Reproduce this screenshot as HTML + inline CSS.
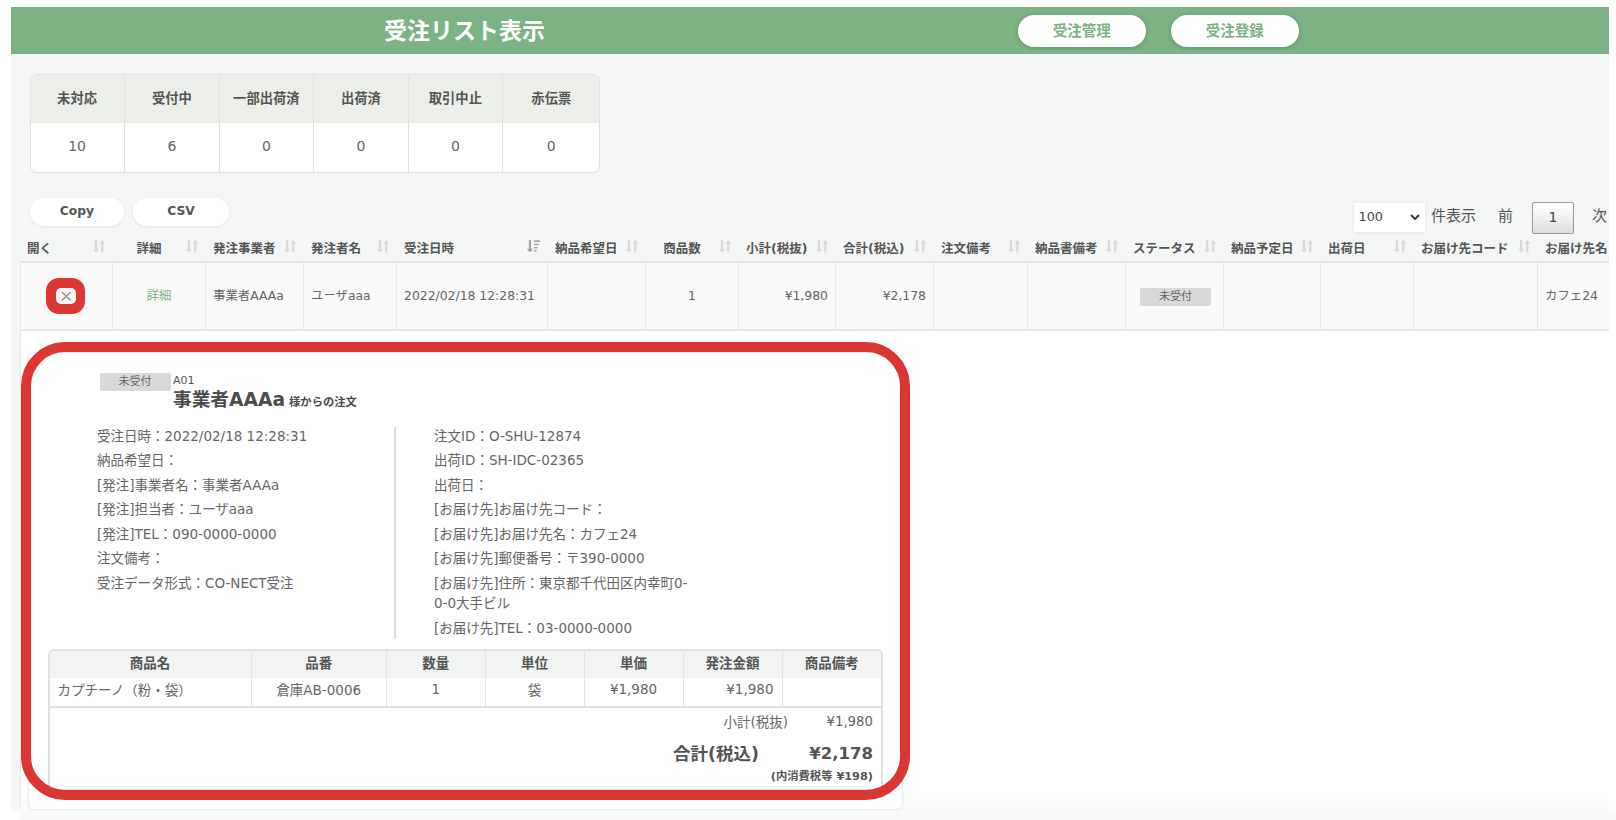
<!DOCTYPE html>
<html lang="ja">
<head>
<meta charset="utf-8">
<title>受注リスト表示</title>
<style>
*{box-sizing:border-box;margin:0;padding:0}
html,body{width:1616px;height:820px;background:#fff;overflow:hidden}
body{font-family:"DejaVu Sans","Liberation Sans","Noto Sans CJK JP",sans-serif;color:#666;font-size:12px;position:relative}
.abs{position:absolute;white-space:nowrap}
#app{position:absolute;left:11px;top:7px;width:1598px;height:804px;background:#f4f5f5;overflow:hidden}
/* everything inside #app is positioned in page coordinates via this shifted layer */
#layer{position:absolute;left:-11px;top:-7px;width:1616px;height:820px}
#hdr{left:11px;top:7px;width:1598px;height:47px;background:#7bb384}
#title{left:384px;top:14px;height:34px;line-height:34px;font-size:23px;font-weight:700;color:#fff;letter-spacing:0}
.pill{background:#fff;border-radius:16px;text-align:center;font-weight:700}
.hbtn{top:15px;width:127.5px;height:32px;line-height:33px;color:#7bb384;font-size:14.5px;box-shadow:0 1px 5px rgba(0,0,0,.2)}
.tbtn{top:198px;height:28px;line-height:26.3px;color:#555;font-size:12.3px;box-shadow:0 1px 3px rgba(0,0,0,.08)}
/* status summary */
#stat{left:30px;top:74px;width:569.5px;height:99px;border:1px solid #dfe2de;border-radius:7px;background:#fff;overflow:hidden}
#stat table{border-collapse:collapse;width:569.5px;margin-left:-1px;table-layout:fixed}
#stat th{height:48px;padding-bottom:3px;background:#eceeea;color:#555;font-size:13.3px;font-weight:700;border-left:1px solid #dfe2de;text-align:center}
#stat td{color:#666;font-size:14px;border-left:1px solid #dfe2de;text-align:center;height:49px;padding-bottom:3px}
#stat th:first-child,#stat td:first-child{border-left:0}

/* controls */
#len{left:1354px;top:203px;width:71px;height:29px;background:#fff;box-shadow:0 1px 3px rgba(0,0,0,.08);font-size:12.8px;color:#444;line-height:27px;padding-left:4.5px}
.ctl{top:202px;height:28px;line-height:28px;font-size:15px;color:#555}
#pg1{left:1532px;top:202px;width:42px;height:32px;border:1px solid #999;border-radius:2px;background:linear-gradient(#fff,#dedede);text-align:center;line-height:28px;font-size:14px;color:#444}
/* list */
.row{left:20px;width:1589px;display:flex}
.row>div{flex:none;position:relative}
#lh{left:21px;width:1588px;top:235.5px;height:27px;border-bottom:2px solid #e3e6e3}
#lh>div{padding-left:8px;line-height:25px;font-size:12.5px;font-weight:700;color:#555;white-space:nowrap}
#lh>div.c{text-align:center;padding-right:27px}#lh>div:first-child{padding-left:6px}
#lh svg{position:absolute;right:7px;top:4.6px;width:12.2px;height:12.6px}
#lr{top:263px;height:68px;background:#f9f9f9;border-bottom:2px solid #e9ebe9;border-left:1px solid #e6e6e6}
#lr>div{border-left:1px solid #e6e6e6;line-height:65.5px;padding:0 7px;font-size:12.4px;color:#666;white-space:nowrap}
#lr>div:first-child{border-left:0}
#lr .c{text-align:center}#lr .r{text-align:right}
.badge{display:inline-block;width:71px;height:18px;line-height:18px;background:#d9d9d9;border-radius:2px;font-size:11px;color:#666;text-align:center;vertical-align:middle}
#xring{left:46px;top:277.8px;width:39px;height:36px;border-radius:13px;background:#db3631}
#xbtn{left:56px;top:288px;width:20px;height:16px;border-radius:5px;background:#f5f5f5}
#child{left:20px;top:331px;width:1589px;height:480px;background:#fff;border-left:1px solid #e6e6e6}

/* detail card */
#card{left:28px;top:351.5px;width:875px;height:458.5px;background:#fff;border:1px solid #ebebeb;border-radius:7px;box-shadow:0 1px 4px rgba(0,0,0,.06)}
#dbadge{left:99.5px;top:373px}
#dcode{left:173px;top:373px;font-size:11px;line-height:16px;color:#555}
#dname{left:173px;top:387px;font-size:18.7px;font-weight:700;line-height:26px;color:#4c4c4c}
#dname small{font-size:11.3px;font-weight:700;margin-left:4px}
.dl{font-size:13.5px;color:#666;list-style:none;white-space:normal}
.dl li{line-height:20.5px;margin-bottom:4px}
#dl1{left:97px;top:425.7px;width:290px}
#dl2{left:434px;top:425.7px;width:262px}
#dsep{left:394.4px;top:427px;width:1.6px;height:212px;background:#d9dcd9}
#items{left:47.5px;top:648.7px;width:835.5px;height:142.3px;border:2px solid #dfe2df;border-radius:6px 6px 0 0;background:#fff;overflow:hidden}
#items table{border-collapse:collapse;table-layout:fixed;width:831.5px}
#items th{height:27.7px;padding-bottom:6px;background:#f2f4f3;font-size:13.5px;font-weight:700;color:#555;text-align:center;border-left:1px solid #e2e4e2}
#items td{height:28.4px;padding-bottom:6px !important;font-size:13.5px;color:#666;text-align:center;border-left:1px solid #e2e4e2;border-bottom:2px solid #dfe1df;padding:0 8px}
#items th:first-child,#items td:first-child{border-left:0}
.tot{text-align:right}
#redbox{left:20.8px;top:342.3px;width:889.2px;height:458.1px;border:10px solid #db3631;border-radius:44px}
</style>
</head>
<body>
<div id="app"><div id="layer">

<div id="hdr" class="abs"></div>
<h1 id="title" class="abs">受注リスト表示</h1>
<a class="abs pill hbtn" style="left:1018px">受注管理</a>
<a class="abs pill hbtn" style="left:1171px">受注登録</a>

<div id="stat" class="abs">
<table><colgroup><col style="width:94.6px"><col style="width:94.5px"><col style="width:94.5px"><col style="width:94.5px"><col style="width:94.5px"><col></colgroup>
<tr><th>未対応</th><th>受付中</th><th>一部出荷済</th><th>出荷済</th><th>取引中止</th><th>赤伝票</th></tr>
<tr><td>10</td><td>6</td><td>0</td><td>0</td><td>0</td><td>0</td></tr>
</table>
</div>

<a class="abs pill tbtn" style="left:30px;width:94px">Copy</a>
<a class="abs pill tbtn" style="left:133px;width:96px">CSV</a>

<div id="len" class="abs">100<svg style="position:absolute;left:56px;top:11px" width="10" height="7" viewBox="0 0 10 7"><path d="M1 1l4 4 4-4" stroke="#333" stroke-width="1.8" fill="none"/></svg></div>
<span class="abs ctl" style="left:1431px">件表示</span>
<span class="abs ctl" style="left:1498px">前</span>
<a id="pg1" class="abs">1</a>
<span class="abs ctl" style="left:1592px">次</span>

<div id="lh" class="abs row"><div style="width:91px">開く<svg viewBox="0 0 12.2 12.6"><g fill="#d6d8d9"><path d="M1.9 0h2.2v9.2H6L3 12.6 0 9.2h1.9z"/><path d="M8.15 12.6h2.2V3.4h1.85L9.25 0 6.3 3.4h1.85z"/></g></svg></div><div class="c" style="width:93px">詳細<svg viewBox="0 0 12.2 12.6"><g fill="#d6d8d9"><path d="M1.9 0h2.2v9.2H6L3 12.6 0 9.2h1.9z"/><path d="M8.15 12.6h2.2V3.4h1.85L9.25 0 6.3 3.4h1.85z"/></g></svg></div><div style="width:98px">発注事業者<svg viewBox="0 0 12.2 12.6"><g fill="#d6d8d9"><path d="M1.9 0h2.2v9.2H6L3 12.6 0 9.2h1.9z"/><path d="M8.15 12.6h2.2V3.4h1.85L9.25 0 6.3 3.4h1.85z"/></g></svg></div><div style="width:93px">発注者名<svg viewBox="0 0 12.2 12.6"><g fill="#d6d8d9"><path d="M1.9 0h2.2v9.2H6L3 12.6 0 9.2h1.9z"/><path d="M8.15 12.6h2.2V3.4h1.85L9.25 0 6.3 3.4h1.85z"/></g></svg></div><div style="width:151px">受注日時<svg viewBox="0 0 13.2 12.6" style="right:6.6px;top:4.4px;width:13.2px"><g fill="#a2a4a6"><path d="M1.9 0h2.2v8.8h2L3 12.6 -.1 8.8h2z"/><path d="M7.1 .3h5.9v1.7H7.1zM7.1 3.7h4.6v1.6H7.1zM7.1 6.9h3.5v1.6H7.1zM7.1 10h2.6v1.6H7.1z"/></g></svg></div><div style="width:98px">納品希望日<svg viewBox="0 0 12.2 12.6"><g fill="#d6d8d9"><path d="M1.9 0h2.2v9.2H6L3 12.6 0 9.2h1.9z"/><path d="M8.15 12.6h2.2V3.4h1.85L9.25 0 6.3 3.4h1.85z"/></g></svg></div><div class="c" style="width:93px">商品数<svg viewBox="0 0 12.2 12.6"><g fill="#d6d8d9"><path d="M1.9 0h2.2v9.2H6L3 12.6 0 9.2h1.9z"/><path d="M8.15 12.6h2.2V3.4h1.85L9.25 0 6.3 3.4h1.85z"/></g></svg></div><div style="width:97px">小計(税抜)<svg viewBox="0 0 12.2 12.6"><g fill="#d6d8d9"><path d="M1.9 0h2.2v9.2H6L3 12.6 0 9.2h1.9z"/><path d="M8.15 12.6h2.2V3.4h1.85L9.25 0 6.3 3.4h1.85z"/></g></svg></div><div style="width:98px">合計(税込)<svg viewBox="0 0 12.2 12.6"><g fill="#d6d8d9"><path d="M1.9 0h2.2v9.2H6L3 12.6 0 9.2h1.9z"/><path d="M8.15 12.6h2.2V3.4h1.85L9.25 0 6.3 3.4h1.85z"/></g></svg></div><div style="width:94px">注文備考<svg viewBox="0 0 12.2 12.6"><g fill="#d6d8d9"><path d="M1.9 0h2.2v9.2H6L3 12.6 0 9.2h1.9z"/><path d="M8.15 12.6h2.2V3.4h1.85L9.25 0 6.3 3.4h1.85z"/></g></svg></div><div style="width:98px">納品書備考<svg viewBox="0 0 12.2 12.6"><g fill="#d6d8d9"><path d="M1.9 0h2.2v9.2H6L3 12.6 0 9.2h1.9z"/><path d="M8.15 12.6h2.2V3.4h1.85L9.25 0 6.3 3.4h1.85z"/></g></svg></div><div style="width:98px">ステータス<svg viewBox="0 0 12.2 12.6"><g fill="#d6d8d9"><path d="M1.9 0h2.2v9.2H6L3 12.6 0 9.2h1.9z"/><path d="M8.15 12.6h2.2V3.4h1.85L9.25 0 6.3 3.4h1.85z"/></g></svg></div><div style="width:97px">納品予定日<svg viewBox="0 0 12.2 12.6"><g fill="#d6d8d9"><path d="M1.9 0h2.2v9.2H6L3 12.6 0 9.2h1.9z"/><path d="M8.15 12.6h2.2V3.4h1.85L9.25 0 6.3 3.4h1.85z"/></g></svg></div><div style="width:93px">出荷日<svg viewBox="0 0 12.2 12.6"><g fill="#d6d8d9"><path d="M1.9 0h2.2v9.2H6L3 12.6 0 9.2h1.9z"/><path d="M8.15 12.6h2.2V3.4h1.85L9.25 0 6.3 3.4h1.85z"/></g></svg></div><div style="width:124px">お届け先コード<svg viewBox="0 0 12.2 12.6"><g fill="#d6d8d9"><path d="M1.9 0h2.2v9.2H6L3 12.6 0 9.2h1.9z"/><path d="M8.15 12.6h2.2V3.4h1.85L9.25 0 6.3 3.4h1.85z"/></g></svg></div><div style="width:72px">お届け先名</div></div>
<div id="lr" class="abs row"><div class="c" style="width:91px"></div><div class="c" style="width:93px"><span style="color:#7bb384">詳細</span></div><div style="width:98px">事業者AAAa</div><div style="width:93px">ユーザaaa</div><div style="width:151px">2022/02/18 12:28:31</div><div style="width:98px"></div><div class="c" style="width:93px">1</div><div class="r" style="width:97px">¥1,980</div><div class="r" style="width:98px">¥2,178</div><div style="width:94px"></div><div style="width:98px"></div><div class="c" style="width:98px"><span class="badge" style="margin-left:2px;margin-top:1px">未受付</span></div><div style="width:97px"></div><div style="width:93px"></div><div style="width:124px"></div><div style="width:72px">カフェ24</div></div>
<div id="xring" class="abs"></div><div id="xbtn" class="abs"><svg width="20" height="16" viewBox="0 0 20 16"><path d="M5.8 4l9 8.4M14.8 4l-9 8.4" stroke="#8c8c8c" stroke-width="1.3" fill="none"/></svg></div>
<div id="child" class="abs"></div><div class="abs" style="left:11px;top:792px;width:1605px;height:28px;background:linear-gradient(rgba(248,248,248,0),#f8f8f8)"></div>

<section id="card" class="abs"></section>
<span id="dbadge" class="abs badge">未受付</span>
<span id="dcode" class="abs">A01</span>
<h2 id="dname" class="abs">事業者AAAa<small>様からの注文</small></h2>
<ul id="dl1" class="abs dl">
<li>受注日時：2022/02/18 12:28:31</li>
<li>納品希望日：</li>
<li>[発注]事業者名：事業者AAAa</li>
<li>[発注]担当者：ユーザaaa</li>
<li>[発注]TEL：090-0000-0000</li>
<li>注文備考：</li>
<li>受注データ形式：CO-NECT受注</li>
</ul>
<div id="dsep" class="abs"></div>
<ul id="dl2" class="abs dl">
<li>注文ID：O-SHU-12874</li>
<li>出荷ID：SH-IDC-02365</li>
<li>出荷日：</li>
<li>[お届け先]お届け先コード：</li>
<li>[お届け先]お届け先名：カフェ24</li>
<li>[お届け先]郵便番号：〒390-0000</li>
<li>[お届け先]住所：東京都千代田区内幸町0-<br>0-0大手ビル</li>
<li>[お届け先]TEL：03-0000-0000</li>
</ul>
<div id="items" class="abs">
<table>
<colgroup><col style="width:201.5px"><col style="width:135.5px"><col style="width:98.5px"><col style="width:99px"><col style="width:99px"><col style="width:99px"><col></colgroup>
<tr><th>商品名</th><th>品番</th><th>数量</th><th>単位</th><th>単価</th><th>発注金額</th><th>商品備考</th></tr>
<tr><td style="text-align:left">カプチーノ（粉・袋）</td><td>倉庫AB-0006</td><td>1</td><td>袋</td><td>¥1,980</td><td style="text-align:right">¥1,980</td><td></td></tr>
</table>
</div>
<span class="abs tot" style="left:690px;width:98px;top:711.5px;font-size:13.5px;line-height:20px">小計(税抜)</span>
<span class="abs tot" style="left:800px;width:73px;top:711.5px;font-size:13.3px;line-height:20px">¥1,980</span>
<span class="abs tot" style="left:650px;width:109px;top:740.7px;font-size:17.5px;line-height:26px;font-weight:700;color:#555">合計(税込)</span>
<span class="abs tot" style="left:790px;width:83px;top:740.7px;font-size:16.5px;line-height:26px;font-weight:700;color:#555">¥2,178</span>
<span class="abs tot" style="left:740px;width:133px;top:768.5px;font-size:11.3px;line-height:16px;font-weight:700;color:#555">(内消費税等 ¥198)</span>
<div id="redbox" class="abs"></div>


</div></div>
<div class="abs" style="left:20px;top:811px;width:1596px;height:9px;background:linear-gradient(#fafafa,#f8f8f8)"></div>
</body>
</html>
